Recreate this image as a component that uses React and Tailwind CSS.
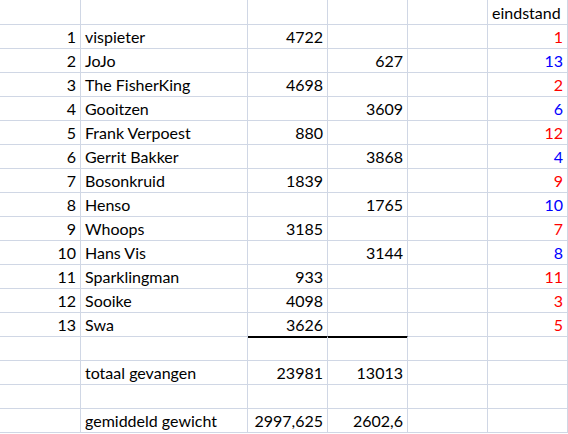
const RED = "text-[#ff0000]";
const BLUE = "text-[#0000ff]";

const players = [
  [1, "vispieter", "4722", "", 1],
  [2, "JoJo", "", "627", 13],
  [3, "The FisherKing", "4698", "", 2],
  [4, "Gooitzen", "", "3609", 6],
  [5, "Frank Verpoest", "880", "", 12],
  [6, "Gerrit Bakker", "", "3868", 4],
  [7, "Bosonkruid", "1839", "", 9],
  [8, "Henso", "", "1765", 10],
  [9, "Whoops", "3185", "", 7],
  [10, "Hans Vis", "", "3144", 8],
  [11, "Sparklingman", "933", "", 11],
  [12, "Sooike", "4098", "", 3],
  [13, "Swa", "3626", "", 5],
];

// one spreadsheet cell, text sits near the bottom like Excel
const Cell = ({ children, right, h = "h-[24px]", extra = "" }) => (
  <div
    className={`${h} border-r border-b border-[#d0d7e5] flex items-end pb-[3px] whitespace-nowrap overflow-hidden ${
      right ? "justify-end pr-[4px]" : "justify-start pl-[4px]"
    } ${extra}`}
  >
    {children}
  </div>
);

const Row = ({ a, b, c, d, f, fColor, h, cExtra = "", dExtra = "" }) => (
  <>
    <Cell right h={h}>{a}</Cell>
    <Cell h={h}>{b}</Cell>
    <Cell right h={h} extra={cExtra}>{c}</Cell>
    <Cell right h={h} extra={dExtra}>{d}</Cell>
    <Cell right h={h} />
    <Cell right h={h} extra={fColor}>{f}</Cell>
  </>
);

export default function App() {
  return (
    <div className="w-[568px] h-[434px] bg-white overflow-hidden text-[16px] leading-none text-black font-['Lato',sans-serif]">
      <div className="grid grid-cols-[81px_167px_80px_80px_80px_80px]">
        <Cell right h="h-[25px]" />
        <Cell h="h-[25px]" />
        <Cell right h="h-[25px]" />
        <Cell right h="h-[25px]" />
        <Cell right h="h-[25px]" />
        <Cell h="h-[25px]">eindstand</Cell>

        {players.map(([n, name, c, d, rank]) => (
          <Row
            key={n}
            a={n}
            b={name}
            c={c}
            d={d}
            f={rank}
            fColor={c ? RED : BLUE}
            cExtra={n === 13 ? "!border-b-black" : ""}
            dExtra={n === 13 ? "!border-b-black" : ""}
          />
        ))}

        <Row
          cExtra="shadow-[inset_0_1px_0_#000]"
          dExtra="shadow-[inset_0_1px_0_#000]"
        />
        <Row b="totaal gevangen" c="23981" d="13013" />
        <Row />
        <Row b="gemiddeld gewicht" c="2997,625" d="2602,6" />
      </div>
    </div>
  );
}
